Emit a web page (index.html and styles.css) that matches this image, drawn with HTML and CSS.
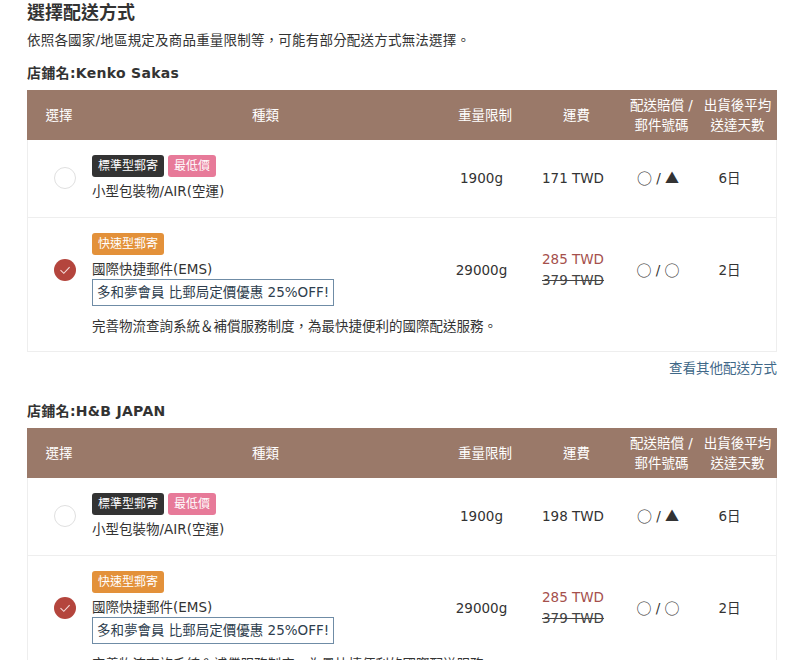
FILE: index.html
```html
<!DOCTYPE html>
<html lang="zh-Hant">
<head>
<meta charset="utf-8">
<link rel="stylesheet" href="styles.css">
</head>
<body>
<div class="page">
  <h1 class="title">選擇配送方式</h1>
  <p class="subtitle">依照各國家/地區規定及商品重量限制等，可能有部分配送方式無法選擇。</p>

  <section class="shop">
    <h2 class="shop-name">店鋪名:Kenko Sakas</h2>
    <div class="table">
      <div class="head">
        <div>選擇</div>
        <div>種類</div>
        <div>重量限制</div>
        <div>運費</div>
        <div>配送賠償 /<br>郵件號碼</div>
        <div>出貨後平均<br>送達天數</div>
      </div>
      <div class="row">
        <div class="c-sel"><span class="radio"></span></div>
        <div class="c-type">
          <div class="badges"><span class="badge dark">標準型郵寄</span><span class="badge pink">最低價</span></div>
          <div class="name">小型包裝物/AIR(空運)</div>
        </div>
        <div class="c-val">1900g</div>
        <div class="c-val">171 TWD</div>
        <div class="c-val"><span class="sym">○</span> / <span class="tri">▲</span></div>
        <div class="c-val days">6日</div>
      </div>
      <div class="row">
        <div class="c-sel"><span class="radio checked"><svg viewBox="0 0 22 22" width="22" height="22"><path d="M6.5 11.2 L9.8 14.3 L15.6 8.2" fill="none" stroke="#f4dcda" stroke-width="1.1"/></svg></span></div>
        <div class="c-type">
          <div class="badges"><span class="badge orange">快速型郵寄</span></div>
          <div class="name">國際快捷郵件(EMS)</div>
          <div class="promo">多和夢會員 比郵局定價優惠 25%OFF!</div>
        </div>
        <div class="c-val">29000g</div>
        <div class="c-val price"><span class="sale">285 TWD</span><span class="old">379 TWD</span></div>
        <div class="c-val"><span class="sym">○</span> / <span class="sym">○</span></div>
        <div class="c-val days">2日</div>
        <div class="desc">完善物流查詢系統＆補償服務制度，為最快捷便利的國際配送服務。</div>
      </div>
    </div>
    <div class="more"><a href="#">查看其他配送方式</a></div>
  </section>

  <section class="shop">
    <h2 class="shop-name">店鋪名:H&amp;B JAPAN</h2>
    <div class="table">
      <div class="head">
        <div>選擇</div>
        <div>種類</div>
        <div>重量限制</div>
        <div>運費</div>
        <div>配送賠償 /<br>郵件號碼</div>
        <div>出貨後平均<br>送達天數</div>
      </div>
      <div class="row">
        <div class="c-sel"><span class="radio"></span></div>
        <div class="c-type">
          <div class="badges"><span class="badge dark">標準型郵寄</span><span class="badge pink">最低價</span></div>
          <div class="name">小型包裝物/AIR(空運)</div>
        </div>
        <div class="c-val">1900g</div>
        <div class="c-val">198 TWD</div>
        <div class="c-val"><span class="sym">○</span> / <span class="tri">▲</span></div>
        <div class="c-val days">6日</div>
      </div>
      <div class="row">
        <div class="c-sel"><span class="radio checked"><svg viewBox="0 0 22 22" width="22" height="22"><path d="M6.5 11.2 L9.8 14.3 L15.6 8.2" fill="none" stroke="#f4dcda" stroke-width="1.1"/></svg></span></div>
        <div class="c-type">
          <div class="badges"><span class="badge orange">快速型郵寄</span></div>
          <div class="name">國際快捷郵件(EMS)</div>
          <div class="promo">多和夢會員 比郵局定價優惠 25%OFF!</div>
        </div>
        <div class="c-val">29000g</div>
        <div class="c-val price"><span class="sale">285 TWD</span><span class="old">379 TWD</span></div>
        <div class="c-val"><span class="sym">○</span> / <span class="sym">○</span></div>
        <div class="c-val days">2日</div>
        <div class="desc">完善物流查詢系統＆補償服務制度，為最快捷便利的國際配送服務。</div>
      </div>
    </div>
  </section>
</div>
</body>
</html>
```

FILE: styles.css
```css
html, body {
  margin: 0;
  padding: 0;
  background: #fff;
}
body {
  font-family: "DejaVu Sans", "Noto Sans CJK TC", sans-serif;
  color: #333;
  font-size: 13.5px;
}
.page {
  width: 750px;
  margin-left: 27px;
  padding-top: 2px;
}
.title {
  margin: 0;
  font-size: 18px;
  line-height: 22px;
  font-weight: bold;
  color: #333;
}
.subtitle {
  margin: 6px 0 0;
  font-size: 13.5px;
  line-height: 20px;
  color: #333;
  letter-spacing: 0.2px;
}
.shop-name {
  margin: 12px 0 0;
  font-size: 14px;
  line-height: 22px;
  font-weight: bold;
  color: #333;
  letter-spacing: 0.3px;
}
.table {
  margin-top: 6px;
  border-left: 1px solid #eee;
  border-right: 1px solid #eee;
  border-bottom: 1px solid #eee;
}
.head, .row {
  display: grid;
  grid-template-columns: 64px 349px 90px 93px 77px 75px;
}
.head {
  background: #9a7969;
  color: #fff;
  height: 50px;
  align-items: center;
  text-align: center;
  font-size: 13.5px;
  line-height: 20px;
  margin: 0 -1px;
}
.row {
  padding: 15px 0 16px;
  border-top: 1px solid #eee;
  align-items: center;
}
.head + .row {
  border-top: none;
}
.c-sel {
  display: flex;
  justify-content: center;
  grid-row: 1;
}
.radio {
  width: 22px;
  height: 22px;
  border-radius: 50%;
  box-sizing: border-box;
  border: 1px solid #e0e0e0;
  display: block;
  margin-left: 9px;
}
.radio.checked {
  background: #b4453d;
  border: none;
}
.radio svg {
  display: block;
}
.c-type {
  grid-row: 1;
}
.badges {
  display: flex;
  gap: 4px;
}
.badge {
  display: inline-block;
  color: #fff;
  font-size: 12px;
  line-height: 22px;
  height: 22px;
  padding: 0 6px;
  border-radius: 3px;
}
.badge.dark { background: #333; }
.badge.pink { background: #e77a99; }
.badge.orange { background: #e3913a; }
.name {
  margin-top: 4px;
  line-height: 20px;
  color: #333;
}
.promo {
  display: inline-block;
  border: 1px solid #6f8ca6;
  font-size: 13.5px;
  line-height: 25px;
  padding: 0 4px 0 4px;
  color: #2e3e4e;
}
.c-val {
  grid-row: 1;
  text-align: center;
  line-height: 20px;
  color: #333;
  padding-right: 9px;
}
.c-val.days {
  padding-right: 18px;
}
.sym {
  font-family: "Noto Sans CJK TC", sans-serif;
  font-size: 15px;
  line-height: 1;
  vertical-align: -1px;
}
.tri {
  font-family: "Noto Sans CJK TC", sans-serif;
  font-size: 14px;
  line-height: 1;
}
.price {
  display: flex;
  flex-direction: column;
  align-items: center;
  line-height: 21px;
}
.sale {
  color: #a5504c;
}
.old {
  text-decoration: line-through;
  color: #444;
}
.desc {
  grid-row: 2;
  grid-column: 2 / -1;
  margin-top: 10px;
  line-height: 20px;
  color: #333;
}
.row:has(.desc) {
  padding-bottom: 15px;
}
.more {
  text-align: right;
  margin-top: 6px;
  line-height: 20px;
}
.more a {
  color: #3f6888;
  text-decoration: none;
  font-size: 13.5px;
}
.shop + .shop .shop-name {
  margin-top: 22px;
}
```
